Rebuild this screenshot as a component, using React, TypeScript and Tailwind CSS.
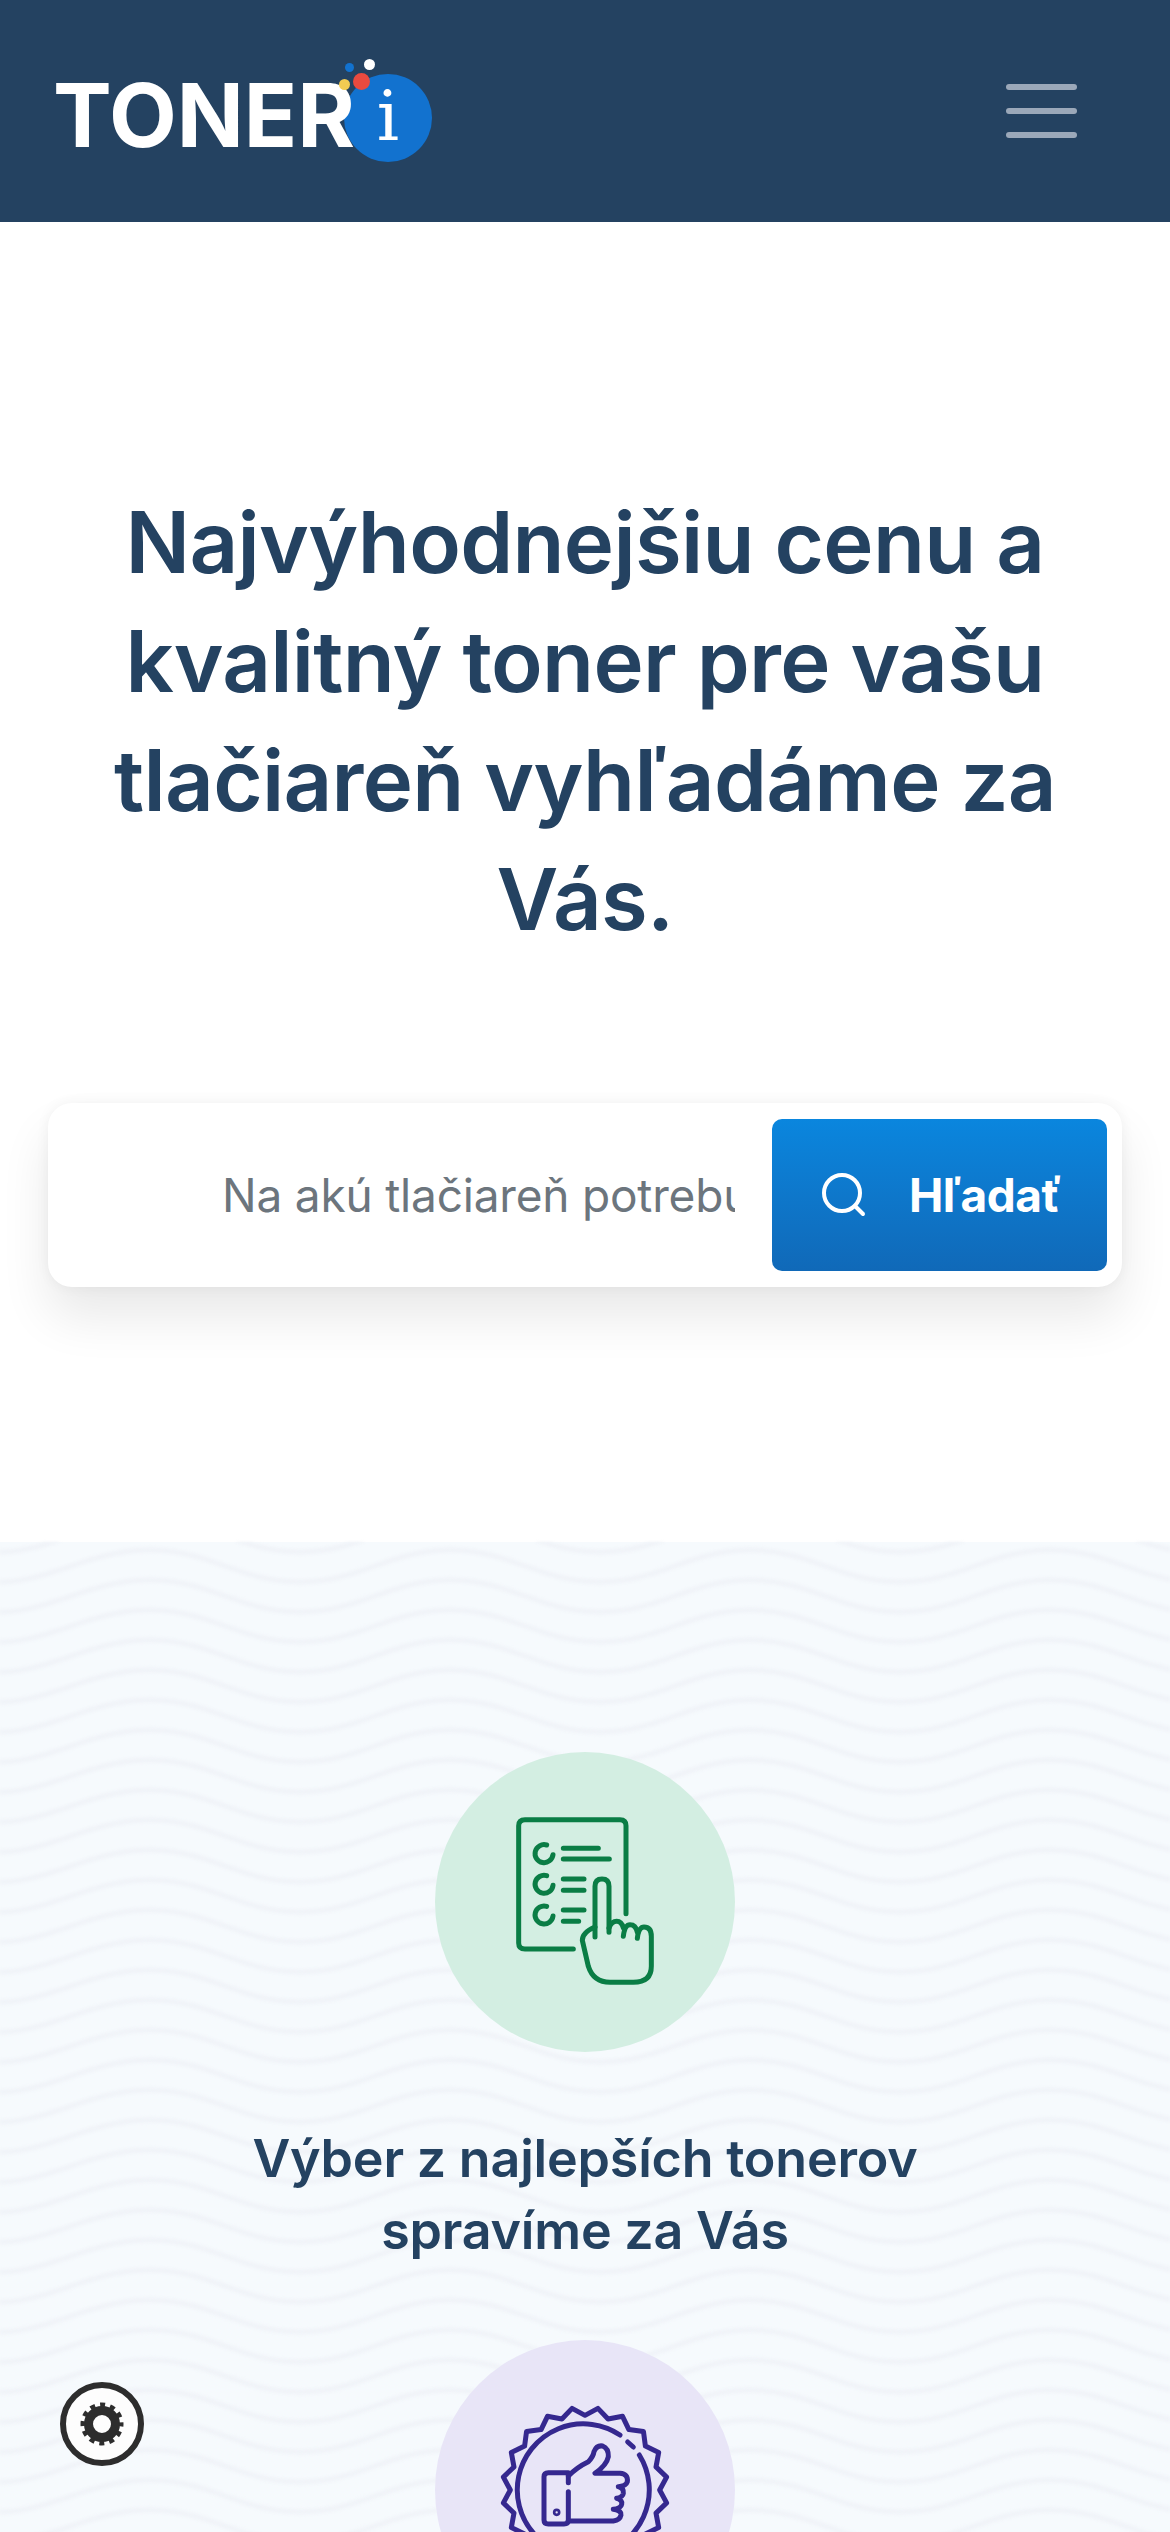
const font = "font-['Inter','Liberation_Sans',sans-serif]";

// scalloped edge of the badge, 20 points around
const scallop = Array.from({length: 40}, (_, i) => {
  const a = (i / 40) * Math.PI * 2 - Math.PI / 2;
  const r = i % 2 === 0 ? 224 : 248;
  return `${(495 + r * Math.cos(a)).toFixed(1)} ${(510 + r * Math.sin(a)).toFixed(1)}`;
});

function Waves() {
  return (
    <svg className="absolute inset-0 w-full h-full blur-[1.5px]" aria-hidden="true">
      {Array.from({length: 38}, (_, i) => (
        <path
          key={i}
          transform={`translate(0 ${i * 30 - 52})`}
          d="M0 32 C50 32 90 0 150 0 C210 0 240 32 300 32 S390 0 450 0 S540 32 600 32 S690 0 750 0 S840 32 900 32 S990 0 1050 0 S1140 32 1200 32"
          fill="none"
          stroke="#f0f3f8"
          strokeWidth="5"
        />
      ))}
    </svg>
  );
}

function Logo() {
  return (
    <div className="relative w-[360px] h-[120px]">
      <div className="absolute left-[344px] top-[23px] w-[88px] h-[88px] rounded-full bg-[#1272cf] flex items-center justify-center pb-[5px]">
        <span className="font-['DejaVu_Serif',serif] text-[70px] leading-none text-white">i</span>
      </div>
      <span className={`absolute left-[53px] top-[20px] ${font} font-bold text-[88px] leading-none text-white`}>
        TONER
      </span>
      <span className="absolute left-[339px] top-[28px] w-[11px] h-[11px] rounded-full bg-[#f2cb52]" />
      <span className="absolute left-[353px] top-[22px] w-[17px] h-[17px] rounded-full bg-[#ea4a3f]" />
      <span className="absolute left-[345px] top-[12px] w-[9px] h-[9px] rounded-full bg-[#1272cf]" />
      <span className="absolute left-[364px] top-[8px] w-[11px] h-[11px] rounded-full bg-white" />
    </div>
  );
}

function ChecklistIcon() {
  return (
    <svg viewBox="45 37 900 900" className="w-full h-full" fill="none" stroke="#0a7d45" strokeWidth="15" strokeLinecap="round" strokeLinejoin="round">
      <path d="M460 628 H315 Q296 628 296 610 V258 Q296 240 315 240 H600 Q618 240 618 258 V522" />
      <path d="M380 316 A27 27 0 1 0 399 345" />
      <path d="M380 408 A27 27 0 1 0 399 437" />
      <path d="M380 500 A27 27 0 1 0 399 529" />
      <path d="M430 326 H535 M430 358 H568 M430 418 H492 M430 452 H492 M430 511 H492 M430 545 H476" />
      <path d="M525 592 V440 Q525 418 546 418 Q567 418 567 440 V578" />
      <path d="M525 562 Q487 578 487 602 L505 680 Q520 728 570 728 H640 Q694 728 694 680 V590 Q694 562 672 562 Q656 562 652 596" />
      <path d="M652 578 Q648 555 630 555 Q614 555 610 590" />
      <path d="M610 565 Q605 545 590 545 Q575 545 567 565" />
    </svg>
  );
}

function BadgeIcon() {
  return (
    <svg viewBox="45 60 900 900" className="w-full h-full" fill="none" stroke="#35288f" strokeWidth="15" strokeLinecap="round" strokeLinejoin="round">
      <path d={`M${scallop.join(' L')} Z`} />
      <path d="M600 345 A198 198 0 1 0 658 405" />
      <path d="M623 366 L640 381" />
      <path d="M445 458 H385 Q372 458 372 470 V600 Q372 612 385 612 H432 Q445 612 445 600 V515" />
      <path d="M445 465 V488" />
      <circle cx="410" cy="577" r="4" />
      <path d="M445 468 Q470 442 505 425 Q520 410 522 395 Q530 375 548 378 Q566 385 565 410 Q560 435 525 460 H600 Q625 462 622 485 Q618 498 595 500 Q612 505 610 520 Q608 532 590 535 Q608 540 605 553 Q603 565 580 568 Q605 572 603 585 Q600 600 580 603 H445" />
    </svg>
  );
}

export default function App() {
  return (
    <div className={`relative flex flex-col h-[2532px] overflow-hidden bg-white ${font}`}>
      <header className="h-[222px] shrink-0 bg-[#244261] flex items-center justify-between pr-[93px]">
        <Logo />
        <button className="flex flex-col gap-[18px] w-[71px]" aria-label="Menu">
          <span className="h-[6px] rounded-full bg-[#9ba8b9]" />
          <span className="h-[6px] rounded-full bg-[#9ba8b9]" />
          <span className="h-[6px] rounded-full bg-[#9ba8b9]" />
        </button>
      </header>

      <section className="h-[1320px] shrink-0 flex flex-col items-center pt-[261px] px-12">
        <h1 className="max-w-[960px] text-center font-semibold text-[85px] leading-[119px] tracking-[-0.7px] text-[#244261]">
          Najvýhodnejšiu cenu a kvalitný toner pre vašu tlačiareň vyhľadáme za Vás.
        </h1>
        <form className="mt-[144px] w-full h-[184px] flex items-stretch bg-white rounded-[24px] py-4 pr-[15px] shadow-[0_30px_50px_rgba(0,0,0,0.09),0_0_14px_rgba(0,0,0,0.05)]">
          <input
            className="min-w-0 flex-1 pl-[174px] bg-transparent text-[46px] tracking-[-0.2px] outline-none placeholder:text-[#6c757d]"
            placeholder="Na akú tlačiareň potrebujete toner?"
          />
          <button type="button" className="ml-[37px] w-[335px] shrink-0 flex items-center gap-[43px] pl-[50px] rounded-[10px] bg-gradient-to-b from-[#0a86de] to-[#1069b8] text-white font-bold text-[46px] tracking-[-0.5px]">
            <svg viewBox="0 0 44 44" className="w-[44px] h-[44px] shrink-0" fill="none" stroke="currentColor" strokeWidth="4" strokeLinecap="round">
              <circle cx="20" cy="20" r="18" />
              <path d="M33 33 L41 41" />
            </svg>
            Hľadať
          </button>
        </form>
      </section>

      <section className="relative flex-1 bg-[#f6fafd]">
        <Waves />
        <div className="relative flex flex-col items-center pt-[210px]">
          <div className="w-[300px] h-[300px] rounded-full bg-[#d3eee2]">
            <ChecklistIcon />
          </div>
          <p className="mt-[71px] text-center font-semibold text-[52px] leading-[72px] tracking-[-0.2px] text-[#244261]">
            Výber z najlepších tonerov
            <br />
            spravíme za Vás
          </p>
          <div className="mt-[73px] w-[300px] h-[300px] shrink-0 rounded-full bg-[#e8e5f7]">
            <BadgeIcon />
          </div>
        </div>
      </section>

      <button className="absolute left-[60px] top-[2382px] w-[84px] h-[84px] rounded-full border-[6px] border-[#2d2d2d] bg-[#fdfdfd] flex items-center justify-center" aria-label="Nastavenia">
        <svg viewBox="0 0 44 44" className="w-[44px] h-[44px]" fill="none" stroke="#2d2d2d">
          <circle cx="22" cy="22" r="13.5" strokeWidth="9" />
          <circle cx="22" cy="22" r="19" strokeWidth="5" strokeDasharray="5 4.95" strokeDashoffset="2.5" />
        </svg>
      </button>
    </div>
  );
}
